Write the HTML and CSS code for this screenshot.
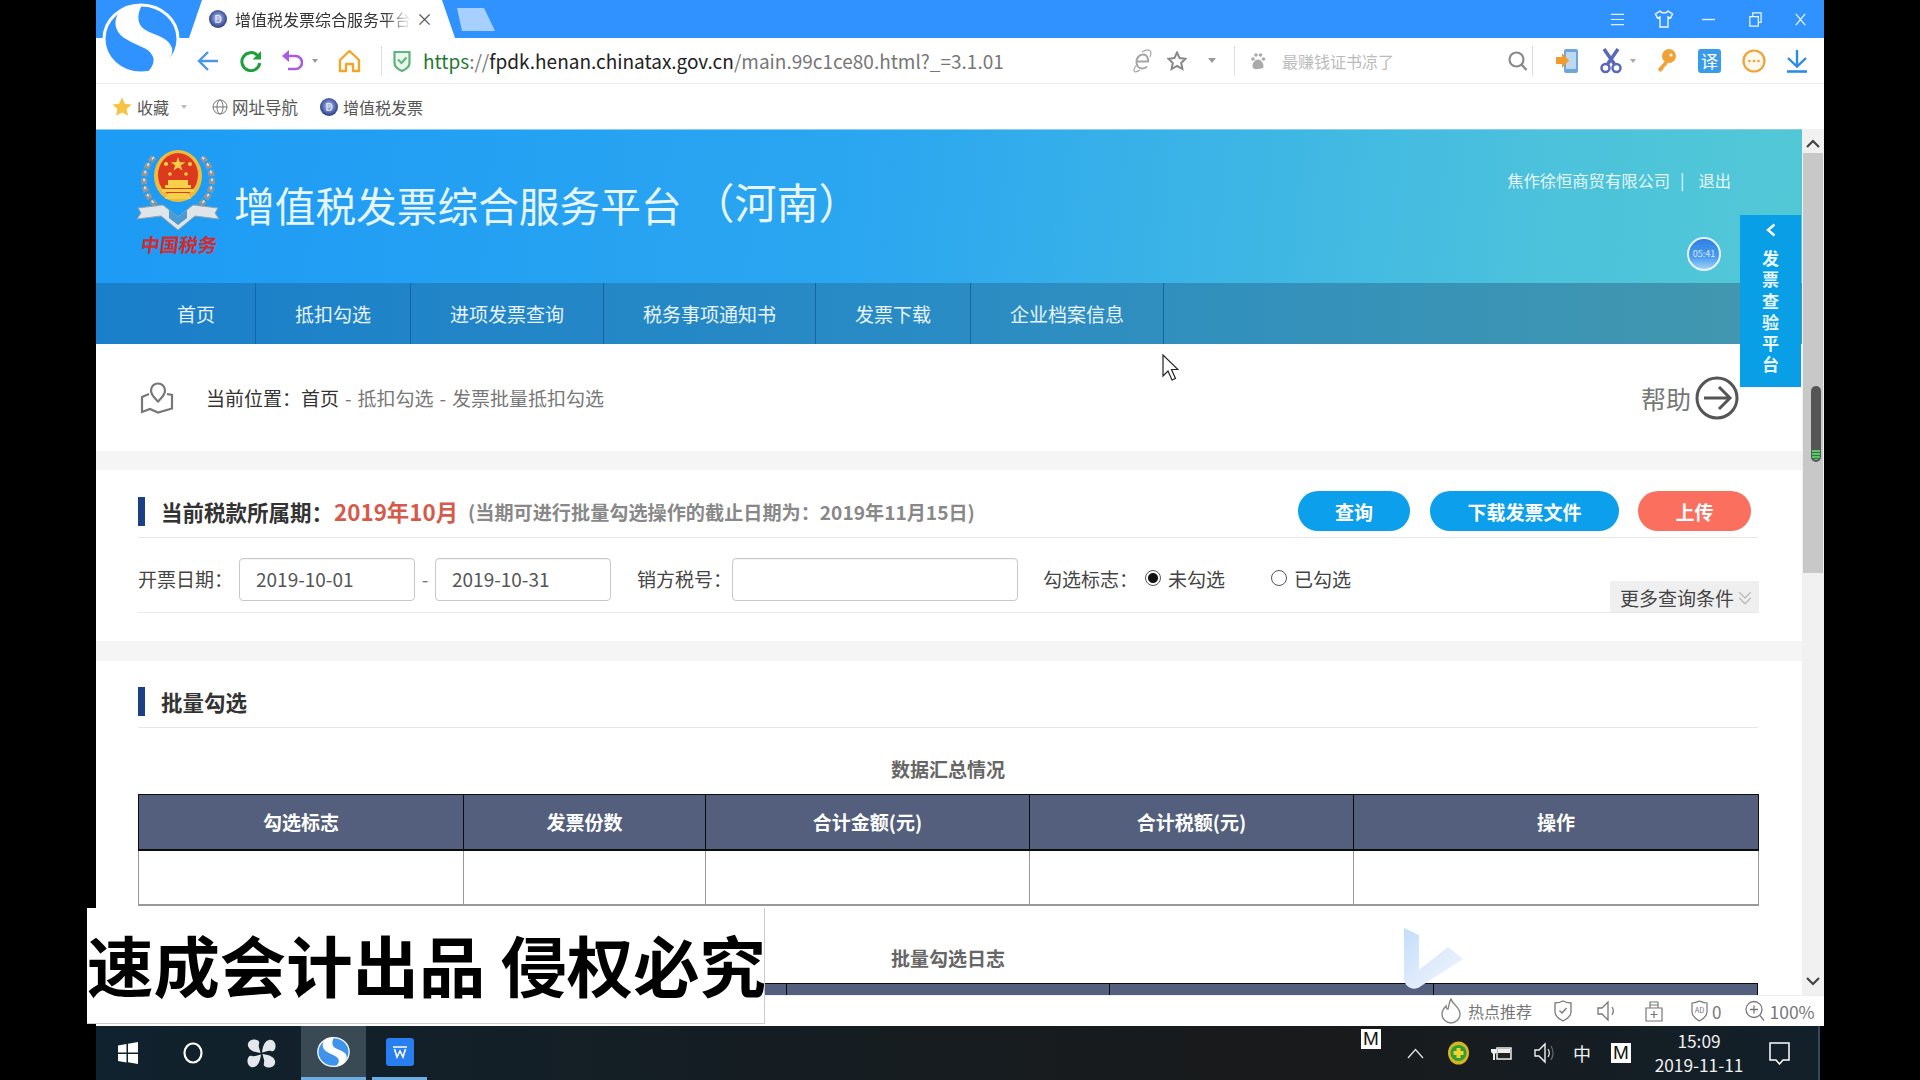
FILE: index.html
```html
<!DOCTYPE html>
<html lang="zh-CN">
<head>
<meta charset="utf-8">
<title>增值税发票综合服务平台</title>
<link rel="stylesheet" href="styles.css">
</head>
<body>
<div class="window">
  <div class="titlebar">
    <div class="tab">
      <svg class="fav" viewBox="0 0 18 18"><defs><radialGradient id="fg" cx="50%" cy="45%" r="55%"><stop offset="0" stop-color="#c9d4f0"/><stop offset=".6" stop-color="#5a70b8"/><stop offset="1" stop-color="#2a3a78"/></radialGradient></defs><circle cx="9" cy="9" r="9" fill="url(#fg)"/><text x="9" y="13" font-size="11" text-anchor="middle" fill="#eef">D</text></svg>
      <span class="tab-text">增值税发票综合服务平台</span>
      <span class="tab-x">×</span>
    </div>
    <div class="newtab"></div>
    <div class="winctl">
      <svg class="wc" viewBox="0 0 16 16"><path d="M1 2.500h14M1 8h14M1 13.500h14" stroke="#e3f0ff" stroke-width="1.300" fill="none"/></svg>
      <svg class="wc wc-shirt" viewBox="0 0 20 20"><path d="M6 2 1.500 5l2 4 2.500-1v10h8V8l2.500 1 2-4L14 2c-1 2.500-7 2.500-8 0Z" stroke="#f0f7ff" stroke-width="1.400" fill="none"/></svg>
      <svg class="wc wc-min" viewBox="0 0 16 16"><path d="M1 8h14" stroke="#e3f0ff" stroke-width="1.500"/></svg>
      <svg class="wc wc-res" viewBox="0 0 16 16"><path d="M2 5h9v10H2zM5 5V1h9v10h-3" stroke="#f0f7ff" stroke-width="1.300" fill="none"/></svg>
      <svg class="wc wc-close" viewBox="0 0 16 16"><path d="M3 2l10 12M13 2 3 14" stroke="#f0f7ff" stroke-width="1.300"/></svg>
    </div>
  </div>

  <div class="addrbar">
    <svg class="i-back" viewBox="0 0 22 22"><path d="M21 11H2M11 2 2 11l9 9" stroke="#4a96e8" stroke-width="2.400" fill="none"/></svg>
    <svg class="i-refresh" viewBox="0 0 22 22"><path d="M17.500 5.500A9 9 0 1 0 19.800 13" stroke="#1d9f3c" stroke-width="3" fill="none"/><path d="M21 1v8.500h-8.500z" fill="#1d9f3c"/></svg>
    <svg class="i-undo" viewBox="0 0 21 22"><path d="M5 6h8.500a6.500 6.500 0 0 1 0 13H6" stroke="#ab5be0" stroke-width="2.600" fill="none"/><path d="M7 0v12L0 6z" fill="#ab5be0"/></svg>
    <svg class="i-dd1" viewBox="0 0 6 4"><path d="M0 0h6L3 4z" fill="#999"/></svg>
    <svg class="i-home" viewBox="0 0 23 24"><path d="M2 11 11.500 2 21 11v11h-6v-7H8v7H2z" stroke="#f3a52a" stroke-width="2.400" fill="none" stroke-linejoin="round"/></svg>
    <span class="sep sep-a"></span>
    <svg class="i-shield" viewBox="0 0 18 22"><path d="M1.500 2h15v11c0 4-4 6.500-7.500 8-3.500-1.500-7.500-4-7.500-8z" stroke="#5db57c" stroke-width="2.200" fill="#eaf6ee"/><path d="m5 9.500 3.500 3.500 5-5.500" stroke="#5db57c" stroke-width="2" fill="none"/></svg>
    <span class="url"><span class="u-g">https</span><span class="u-l">://</span><span class="u-d">fpdk.henan.chinatax.gov.cn</span><span class="u-l">/main.99c1ce80.html?_=3.1.01</span></span>
    <svg class="i-e" viewBox="0 0 20 24"><g fill="none" stroke="#a5a5a5"><path d="M4 12.500h11c.5-4-1.500-7-5-7-4 0-6.500 3.500-6.500 7.500s2.500 6.500 6 6.500c2 0 3.500-.7 4.500-2" stroke-width="2"/><path d="M3.500 16C-1 22 1 25 7 21M9 3c6-3.500 11-3 8 5" stroke-width="1.200"/></g></svg>
    <svg class="i-star" viewBox="0 0 20 20"><path d="m10 1.500 2.600 5.600 6 .7-4.400 4.100 1.200 6L10 15l-5.400 3 1.200-6L1.400 7.800l6-.7z" stroke="#888" stroke-width="2" fill="none"/></svg>
    <svg class="i-dd2" viewBox="0 0 8 5"><path d="M0 0h8L4 5z" fill="#999"/></svg>
    <span class="sep sep-b"></span>
    <svg class="i-paw" viewBox="0 0 16 18"><g fill="#aaa"><circle cx="3" cy="7" r="1.800"/><circle cx="6" cy="3" r="1.800"/><circle cx="10.500" cy="3" r="1.800"/><circle cx="13.500" cy="7" r="1.800"/><path d="M8 7.500c-3 0-5.500 3.500-5.500 6.500 0 3 3 3.500 5.500 3s5.500 0 5.500-3c0-3-2.500-6.500-5.500-6.500Z"/></g></svg>
    <span class="search-ph">最赚钱证书凉了</span>
    <svg class="i-search" viewBox="0 0 20 20"><circle cx="8.500" cy="8.500" r="7" stroke="#8a8a8a" stroke-width="2.200" fill="none"/><path d="m13.500 13.500 5 5.500" stroke="#8a8a8a" stroke-width="2.400"/></svg>
    <span class="sep sep-c"></span>
    <svg class="i-phone" viewBox="0 0 23 26"><rect x="8" y="1" width="14" height="24" rx="2" fill="#6ea6dc"/><rect x="10" y="4" width="10" height="17" fill="#bcd8f2"/><path d="M0 9h6V5l7 7.500L6 20v-4H0z" fill="#f29a2e"/></svg>
    <svg class="i-scis" viewBox="0 0 22 26"><path d="M4 1 15 17M18 1 7 17" stroke="#5a68b8" stroke-width="3.500"/><circle cx="5.500" cy="20" r="4" stroke="#5a68b8" stroke-width="2.500" fill="none"/><circle cx="16.500" cy="20" r="4" stroke="#5a68b8" stroke-width="2.500" fill="none"/></svg>
    <svg class="i-dd3" viewBox="0 0 6 4"><path d="M0 0h6L3 4z" fill="#aaa"/></svg>
    <svg class="i-key" viewBox="0 0 20 24"><circle cx="13" cy="7" r="7" fill="#f0a236"/><path d="M10 11 2 20l2 3 3-2 1-3 2-1 3-6z" fill="#f0a236"/><circle cx="15" cy="6" r="1.500" fill="#fff"/></svg>
    <span class="i-yi">译</span>
    <svg class="i-more" viewBox="0 0 24 24"><circle cx="12" cy="12" r="10.500" stroke="#f0a236" stroke-width="2.200" fill="#fff8ec"/><g fill="#f0a236"><circle cx="7.500" cy="12" r="1.300"/><circle cx="12" cy="12" r="1.300"/><circle cx="16.500" cy="12" r="1.300"/></g></svg>
    <svg class="i-down" viewBox="0 0 24 24"><path d="M12 1v15M3 9l9 8.500L21 9" stroke="#2a8ce8" stroke-width="2.400" fill="none"/><path d="M2 22.500h20" stroke="#2a8ce8" stroke-width="2.600"/></svg>
  </div>

  <div class="bookbar">
    <svg class="b-star" viewBox="0 0 20 20"><path d="m10 .5 2.900 6.200 6.700.8-5 4.600 1.400 6.700L10 15.400l-6 3.400 1.400-6.700-5-4.600 6.700-.8z" fill="#f6c344"/></svg>
    <span class="b-t1">收藏</span>
    <svg class="b-dd" viewBox="0 0 6 4"><path d="M0 0h6L3 4z" fill="#bbb"/></svg>
    <svg class="b-globe" viewBox="0 0 16 16"><g stroke="#777" fill="none"><circle cx="8" cy="8" r="7"/><ellipse cx="8" cy="8" rx="3" ry="7"/><path d="M1 8h14"/></g></svg>
    <span class="b-t2">网址导航</span>
    <svg class="b-fav" viewBox="0 0 18 18"><circle cx="9" cy="9" r="9" fill="url(#fg)"/><text x="9" y="13" font-size="11" text-anchor="middle" fill="#eef">D</text></svg>
    <span class="b-t3">增值税发票</span>
  </div>

  <div class="viewport">
    <div class="page">
      <header class="header">
        <div class="brand">
          <svg class="emblem" viewBox="0 0 86 82">
            <g stroke="#8d979c" stroke-width="6" fill="none" stroke-dasharray="6 2">
              <path d="M19 8C3 24 6 50 30 62"/><path d="M67 8c16 16 13 42-11 54"/>
            </g>
            <g stroke="#e6ecee" stroke-width="1.500" fill="none" stroke-dasharray="3 5">
              <path d="M19 8C3 24 6 50 30 62"/><path d="M67 8c16 16 13 42-11 54"/>
            </g>
            <ellipse cx="43" cy="27" rx="24" ry="26" fill="#eebb3e"/>
            <ellipse cx="43" cy="26" rx="20" ry="22" fill="#dc3a1e"/>
            <g fill="#f7d04a">
              <path d="m43 8 1.800 5.200h5.400l-4.400 3.200 1.700 5.200-4.500-3.200-4.500 3.200 1.700-5.200-4.400-3.200h5.400z"/>
              <circle cx="31" cy="15" r="2"/><circle cx="55" cy="15" r="2"/><circle cx="35" cy="25" r="1.800"/><circle cx="51" cy="25" r="1.800"/>
              <path d="M30 36h26v3H30zM33 31h20v5H33zM27 40h32v3H27z"/>
              <path d="M33 44h20l3 6H30z"/>
            </g>
            <path d="M3 59 28 56 43 68 58 56 83 59 80 64 84 70 60 67 43 81 26 67 2 70 6 64Z" fill="#dfe5e8" stroke="#98a3aa" stroke-width="1"/>
            <path d="M34 61 43 68 52 61 52 69 43 76 34 69Z" fill="#4a9ad4"/>
          </svg>
          <span class="brand-cn">中国税务</span>
        </div>
        <h1 class="title">增值税发票综合服务平台</h1>
        <div class="region">（河南）</div>
        <div class="head-right">
          <div class="user"><span>焦作徐恒商贸有限公司</span><span class="bar-sep">|</span><span>退出</span></div>
          <div class="clock">05:41</div>
        </div>
      </header>
      <nav class="nav">
        <a class="nav-item nav-first">首页</a>
        <a class="nav-item">抵扣勾选</a>
        <a class="nav-item">进项发票查询</a>
        <a class="nav-item">税务事项通知书</a>
        <a class="nav-item">发票下载</a>
        <a class="nav-item">企业档案信息</a>
      </nav>

      <div class="crumb">
        <svg class="c-icon" viewBox="0 0 34 32"><g stroke="#777" stroke-width="2.200" fill="none"><path d="M18 1.500c-4 0-7 3-7 7 0 4.500 4 8 7 11 3-3 7-6.500 7-11 0-4-3-7-7-7Z"/><path d="M9 12 2 15v15l8-3 8 3.500 14-4V13l-5-1"/></g></svg>
        <span class="c-text"><b class="c-dark">当前位置：首页</b> - 抵扣勾选 - 发票批量抵扣勾选</span>
        <span class="help">帮助</span>
        <svg class="help-ic" viewBox="0 0 44 44"><circle cx="22" cy="22" r="20" stroke="#555" stroke-width="3" fill="none"/><path d="M9 22h25M24 11l11 11-11 11" stroke="#555" stroke-width="3" fill="none"/></svg>
      </div>

      <section class="panel">
        <div class="sec-head">
          <span class="sec-bar"></span>
          <span class="sec-title">当前税款所属期：</span>
          <span class="period">2019年10月</span>
          <span class="note">(当期可进行批量勾选操作的截止日期为：2019年11月15日)</span>
          <div class="btns">
            <button class="btn btn-q">查询</button>
            <button class="btn btn-d">下载发票文件</button>
            <button class="btn btn-u">上传</button>
          </div>
        </div>
        <div class="filters">
          <label class="lb lb1">开票日期：</label>
          <input class="ipt ipt-date" value="2019-10-01">
          <span class="dash">-</span>
          <input class="ipt ipt-date" value="2019-10-31">
          <label class="lb lb2">销方税号：</label>
          <input class="ipt ipt-tax">
          <label class="lb lb3">勾选标志：</label>
          <span class="radio radio-on"></span><span class="r-t">未勾选</span>
          <span class="radio radio-2"></span><span class="r-t">已勾选</span>
          <div class="more">更多查询条件<svg class="more-ic" viewBox="0 0 12 14"><path d="m1 2 5 5 5-5M1 7l5 5 5-5" stroke="#bbb" stroke-width="1.200" fill="none"/></svg></div>
        </div>
      </section>

      <section class="panel panel-2">
        <div class="sec-head">
          <span class="sec-bar"></span>
          <span class="sec-title">批量勾选</span>
        </div>
        <div class="cap cap-1">数据汇总情况</div>
        <table class="tbl">
          <colgroup><col class="c1"><col class="c2"><col class="c3"><col class="c3"><col class="c5"></colgroup>
          <thead><tr><th>勾选标志</th><th>发票份数</th><th>合计金额(元)</th><th>合计税额(元)</th><th>操作</th></tr></thead>
          <tbody><tr><td></td><td></td><td></td><td></td><td></td></tr></tbody>
        </table>
        <div class="cap cap-2">批量勾选日志</div>
        <table class="tbl">
          <thead><tr><th></th><th></th><th></th><th></th><th></th></tr></thead>
        </table>
      </section>

      <aside class="sidetab">
        <svg class="side-ch" viewBox="0 0 10 14"><path d="M8.500 1.500 2 7l6.500 5.500" stroke="#fff" stroke-width="2.400" fill="none"/></svg>
        <span>发</span><span>票</span><span>查</span><span>验</span><span>平</span><span>台</span>
      </aside>
    </div>
    <div class="scrollbar">
      <svg class="sb-up" viewBox="0 0 14 9"><path d="m1 8 6-6 6 6" stroke="#444" stroke-width="2.200" fill="none"/></svg>
      <div class="sb-thumb"><div class="sb-dark"><div class="sb-green"></div></div></div>
      <svg class="sb-down" viewBox="0 0 14 9"><path d="m1 1 6 6 6-6" stroke="#444" stroke-width="2.200" fill="none"/></svg>
    </div>
  </div>

  <div class="statusbar">
    <svg class="s-flame" viewBox="0 0 22 26"><path d="M11 1c1 5 9 8 9 15a9 9 0 0 1-18 0c0-4 2-6 4-8 0 2 1 3 2 3 1-3 1-7 3-10Z" stroke="#888" stroke-width="1.400" fill="none"/></svg>
    <span class="s-hot">热点推荐</span>
    <svg class="s-shield" viewBox="0 0 18 22"><path d="M1 3c3 0 6-1 8-2 2 1 5 2 8 2v9c0 4-4 7-8 9-4-2-8-5-8-9z" stroke="#777" stroke-width="1.300" fill="none"/><path d="m5.500 10.500 2.500 2.500 4.500-5" stroke="#777" stroke-width="1.300" fill="none"/></svg>
    <svg class="s-spk" viewBox="0 0 21 22"><path d="M1 8h4l6-6v18l-6-6H1z" stroke="#777" stroke-width="1.300" fill="none"/><path d="M15 7c2 3 2 5 0 8" stroke="#777" stroke-width="1.300" fill="none"/></svg>
    <svg class="s-box" viewBox="0 0 18 22"><path d="M1 8h16v13H1zM5 8V2h8v6M5 5h8M9 11v7M5.500 14.500h7" stroke="#777" stroke-width="1.200" fill="none"/></svg>
    <span class="s-ad"><svg class="s-adic" viewBox="0 0 17 22"><path d="M1 3c3 0 5-1 7.500-2C11 2 13 3 16 3v9c0 4-4 7-7.500 9C5 19 1 16 1 12z" stroke="#777" stroke-width="1.200" fill="none"/><text x="8.500" y="13" font-size="7.500" text-anchor="middle" fill="#777">AD</text></svg><span class="s-zero">0</span></span>
    <svg class="s-zoom" viewBox="0 0 20 22"><circle cx="9" cy="9.500" r="8" stroke="#777" stroke-width="1.300" fill="none"/><path d="M9 5.500v8M5 9.500h8M15 15.500l4 5" stroke="#777" stroke-width="1.300"/></svg>
    <span class="s-pct">100%</span>
  </div>
</div>

<div class="taskbar">
  <svg class="t-win" viewBox="0 0 20 22"><path d="M0 3.500 8.500 2v8.500H0zM10 1.800 20 0v10.500H10zM0 12h8.500v8.500L0 19zM10 12h10v10l-10-1.800z" fill="#fff"/></svg>
  <svg class="t-cort" viewBox="0 0 20 22"><ellipse cx="10" cy="11" rx="8.500" ry="9.500" stroke="#fff" stroke-width="2.200" fill="none"/></svg>
  <svg class="t-pin" viewBox="0 0 29 29"><g fill="#e4e7ec"><path d="M13.500 14C6 13 2 11 1 7s3-7 7-6.500c3 .5 5 2 4 4.500-1 2.500 1 5.500 1.500 9Z"/><path d="M15 13.500C16 6 18 2 22 1s7 3 6.500 7c-.5 3-2 5-4.500 4-2.500-1-5.500 1-9 1.500Z"/><path d="M15.500 15C23 16 27 18 28 22s-3 7-7 6.500c-3-.5-5-2-4-4.500 1-2.500-1-5.500-1.500-9Z"/><path d="M14 15.500C13 23 11 27 7 28s-7-3-6.500-7c.5-3 2-5 4.500-4 2.500 1 5.500-1 9-1.500Z"/></g></svg>
  <div class="t-active">
    <svg class="t-s" viewBox="0 0 78 72"><ellipse cx="39" cy="36" rx="37" ry="34" fill="#3f93ec" stroke="#fff" stroke-width="3"/><path d="M24 3C10 12 10 28 24 36 34 43 46 44 50 52 54 58 50 65 44 71 60 67 72 56 70 45 66 33 50 32 42 26 36 22 34 13 40 2Z" fill="#fff"/></svg>
  </div>
  <div class="t-wps-wrap"><div class="t-wps"><svg viewBox="0 0 18 14"><path d="M2 2h14M3.500 4 6 12l3-6 3 6 2.500-8" stroke="#fff" stroke-width="1.600" fill="none"/></svg></div></div>
  <svg class="t-up" viewBox="0 0 17 11"><path d="m1 10 7.500-8.500L16 10" stroke="#ddd" stroke-width="1.400" fill="none"/></svg>
  <svg class="t-360" viewBox="0 0 21 24"><ellipse cx="10.500" cy="12" rx="10.500" ry="11.500" fill="#d8b51e"/><circle cx="10.500" cy="12" r="8" fill="#2f9d3c"/><path d="M8.500 7h4v3h3v4h-3v3h-4v-3h-3v-4h3z" fill="#f2d42a"/></svg>
  <svg class="t-pow" viewBox="0 0 21 18"><path d="M6 4h14v11H6z" stroke="#eee" stroke-width="1.500" fill="#222"/><path d="M7 5h12v4H7z" fill="#eee"/><path d="M1 1v4M5 1v4M0 5h6v3l-2 2v6H2v-6L0 8z" fill="#eee"/></svg>
  <svg class="t-vol" viewBox="0 0 21 22"><path d="M1 8h4l6-6v18l-6-6H1z" stroke="#eee" stroke-width="1.400" fill="none"/><path d="M14 7c2 3 2 5 0 8" stroke="#ddd" stroke-width="1.300" fill="none"/><path d="M17 4c3 5 3 9 0 14" stroke="#666" stroke-width="1.300" fill="none"/></svg>
  <span class="t-zh">中</span>
  <span class="t-m">M</span>
  <div class="t-clock"><span>15:09</span><span>2019-11-11</span></div>
  <svg class="t-note" viewBox="0 0 21 23"><path d="M1 1h19v17h-6l-3.500 4-3.500-4H1z" stroke="#fff" stroke-width="1.500" fill="none"/></svg>
</div>

<div class="wm">速成会计出品 侵权必究</div>
<span class="ov-m">M</span>
<svg class="logo" viewBox="0 0 78 72"><ellipse cx="39" cy="36" rx="37" ry="34" fill="#2f92fe" stroke="#fff" stroke-width="3"/><path d="M24 3C10 12 10 28 24 36 34 43 46 44 50 52 54 58 50 65 44 71 60 67 72 56 70 45 66 33 50 32 42 26 36 22 34 13 40 2Z" fill="#fff"/></svg>
<svg class="bing" viewBox="0 0 60 70"><defs><linearGradient id="bg" x1="0" y1="0" x2="1" y2="1"><stop offset="0" stop-color="#c4ddf9"/><stop offset=".55" stop-color="#e0ecfc"/><stop offset="1" stop-color="#f1f7fe"/></linearGradient></defs><path d="M0 8 15 15V50L44 27 59 39 14 68Q3 71 0 60Z" fill="url(#bg)"/></svg>
<svg class="cursor" viewBox="0 0 17 27"><path d="M1 1v21l5-5 4 9 3.500-1.500-4-9H16Z" fill="#fff" stroke="#222" stroke-width="1.200"/></svg>
</body>
</html>
```

FILE: styles.css
```css
* { box-sizing: border-box; }
html, body { margin: 0; height: 100%; }
body {
  position: relative;
  width: 1920px;
  height: 1080px;
  overflow: hidden;
  background: #000;
  font-family: "Noto Sans CJK SC", "Noto Sans", sans-serif;
  color: #333;
}
svg { display: block; flex: none; }

.window { margin-left: 96px; width: 1728px; height: 1026px; display: flex; flex-direction: column; background: #fff; }

/* title bar */
.titlebar { height: 38px; background: #2f92fe; display: flex; flex: none; }
.tab {
  margin-left: 93px; width: 266px; height: 38px; background: #fff; display: flex; align-items: center;
  clip-path: polygon(0 100%, 13px 0, 253px 0, 100% 100%);
  padding-left: 20px;
}
.fav { width: 18px; height: 18px; }
.tab-text {
  margin-left: 8px; width: 176px; font-size: 16px; line-height: 24px; white-space: nowrap; color: #333;
  -webkit-mask-image: linear-gradient(90deg, #000 85%, transparent 100%);
  mask-image: linear-gradient(90deg, #000 85%, transparent 100%);
  clip-path: inset(0);
}
.tab-x { margin-left: 5px; font-size: 17px; line-height: 20px; color: #555; }
.newtab { margin: 8px 0 0 2px; width: 38px; height: 23px; background: #a8d0fe; clip-path: polygon(0 0, 27px 0, 100% 100%, 5px 100%); }
.winctl { margin-left: auto; display: flex; align-items: center; }
.wc { width: 15px; height: 15px; }
.wc-shirt { width: 20px; height: 20px; margin-left: 29px; }
.wc-min { width: 15px; margin-left: 27px; }
.wc-res { margin-left: 32px; }
.wc-close { margin-left: 30px; margin-right: 16px; }

/* address bar */
.addrbar { height: 46px; flex: none; display: flex; align-items: center; border-bottom: 1px solid #eee; font-size: 16px; }
.i-back { width: 22px; height: 22px; margin-left: 101px; }
.i-refresh { width: 22px; height: 22px; margin-left: 21px; }
.i-undo { width: 21px; height: 22px; margin-left: 20px; }
.i-dd1 { width: 6px; height: 4px; margin-left: 9px; }
.i-home { width: 23px; height: 24px; margin-left: 20px; }
.sep { width: 1px; height: 30px; background: #ddd; flex: none; }
.sep-a { margin-left: 20px; }
.i-shield { width: 18px; height: 22px; margin-left: 11px; }
.url { margin-left: 12px; width: 590px; font-size: 19px; white-space: nowrap; }
.u-g { color: #1f7a2e; }
.u-l { color: #777; }
.u-d { color: #222; }
.i-e { width: 20px; height: 24px; margin-left: 120px; }
.i-star { width: 20px; height: 20px; margin-left: 14px; }
.i-dd2 { width: 8px; height: 5px; margin-left: 21px; }
.sep-b { margin-left: 18px; }
.i-paw { width: 16px; height: 18px; margin-left: 15px; }
.search-ph { margin-left: 16px; width: 114px; color: #bbb; white-space: nowrap; }
.i-search { width: 20px; height: 20px; margin-left: 112px; }
.sep-c { margin-left: 4px; }
.i-phone { width: 23px; height: 26px; margin-left: 23px; }
.i-scis { width: 22px; height: 26px; margin-left: 21px; }
.i-dd3 { width: 6px; height: 4px; margin-left: 8px; }
.i-key { width: 20px; height: 24px; margin-left: 20px; }
.i-yi { width: 23px; height: 24px; margin-left: 22px; background: #3a9be8; color: #fff; border-radius: 3px; font-size: 17px; line-height: 24px; text-align: center; }
.i-more { width: 24px; height: 24px; margin-left: 21px; }
.i-down { width: 24px; height: 24px; margin-left: 19px; }

/* bookmarks */
.bookbar { height: 45px; flex: none; display: flex; align-items: center; font-size: 16px; color: #555; }
.b-star { width: 20px; height: 20px; margin-left: 16px; }
.b-t1 { margin-left: 5px; }
.b-dd { width: 6px; height: 4px; margin-left: 12px; }
.b-globe { width: 16px; height: 16px; margin-left: 25px; }
.b-t2 { margin-left: 4px; font-size: 16.500px; }
.b-fav { width: 18px; height: 18px; margin-left: 22px; }
.b-t3 { margin-left: 5px; }

/* viewport */
.viewport { height: 866px; flex: none; display: flex; }
.page { position: relative; width: 1706px; height: 866px; overflow: hidden; background: #f5f5f5; flex: none; }

.header { height: 154px; display: flex; align-items: flex-start; color: #e8f6ff; background: linear-gradient(96deg, #1d9bf5 0%, #2ba6f0 45%, #4cc2dc 85%, #52c8d6 100%); border-top: 1px solid #8ccdf0; }
.brand { margin: 19px 0 0 39px; width: 86px; display: flex; flex-direction: column; }
.emblem { width: 86px; height: 82px; }
.brand-cn { margin: 0 0 0 6px; font-size: 19px; line-height: 26px; font-weight: 700; color: #d42a2c; white-space: nowrap; transform: skewX(-8deg); }
.title { margin: 45px 0 0 13px; font-size: 40.700px; line-height: 60px; font-weight: 400; white-space: nowrap; color: #e6f5ff; }
.region { margin: 41px 0 0 11px; font-size: 42px; line-height: 60px; white-space: nowrap; color: #e6f5ff; }
.head-right { margin-left: auto; padding: 38px 71px 0 0; display: flex; flex-direction: column; align-items: flex-end; }
.user { font-size: 16.300px; line-height: 24px; white-space: nowrap; color: #e6f7f9; }
.bar-sep { margin: 0 14px 0 10px; }
.clock { margin: 45px 10px 0 0; width: 34px; height: 34px; border-radius: 50%; border: 2px solid #e8f4fb; background: linear-gradient(180deg, #2f7fe0 0%, #4a9cf0 60%, #9fd0f6 100%); color: #dbeaff; font-size: 9px; line-height: 30px; text-align: center; }

.nav { height: 61px; display: flex; background: linear-gradient(90deg, #1a7fca 0%, #2a8cc4 50%, #4398ad 100%); }
.nav-item { padding: 0 39px; font-size: 19px; line-height: 61px; color: #e9f5ff; border-right: 1px solid #16659f; white-space: nowrap; }
.nav-first { padding: 0 40px 0 81px; }

.crumb { height: 107px; background: #fff; display: flex; align-items: center; padding-left: 44px; font-size: 19px; }
.c-icon { width: 34px; height: 32px; }
.c-text { margin-left: 32px; color: #777; white-space: nowrap; word-spacing: 1.700px; }
.c-dark { color: #333; font-weight: 400; }
.help { margin-left: auto; font-size: 25px; color: #777; }
.help-ic { width: 44px; height: 44px; margin: 0 63px 0 4px; }

.panel { margin-top: 19px; height: 171px; background: #fff; padding: 0 44px 0 42px; }
.panel-2 { height: 400px; margin-top: 20px; }
.sec-head { display: flex; align-items: center; padding: 21px 0 6px; min-height: 67px; border-bottom: 1px solid #e8e8e8; white-space: nowrap; }
.sec-bar { width: 7px; height: 29px; background: #1c3f85; margin-right: 16px; flex: none; }
.sec-title { font-size: 21.500px; font-weight: 700; color: #333; }
.period { margin-left: 1px; font-size: 22.400px; font-weight: 700; color: #d65a4c; }
.note { margin: 2px 0 0 10px; font-size: 19.150px; font-weight: 700; color: #888; }
.btns { margin-left: auto; padding-right: 7px; display: flex; }
.btn { height: 40px; border: 0; border-radius: 20px; background: #0c9fec; color: #fff; font: 700 19px "Noto Sans CJK SC", sans-serif; padding: 0; }
.btn-q { width: 112px; }
.btn-d { width: 189px; margin-left: 20px; }
.btn-u { width: 113px; margin-left: 19px; background: #fb6f5f; }

.filters { height: 75px; padding-top: 20px; display: flex; align-items: flex-start; border-bottom: 1px solid #e8e8e8; font-size: 19px; white-space: nowrap; color: #444; }
.lb { line-height: 41px; flex: none; width: 95px; }
.lb1 { margin-right: 6px; }
.lb2 { margin-left: 26px; }
.lb3 { margin: 0 7px 0 25px; }
.ipt { height: 43px; border: 1px solid #c8c8c8; border-radius: 4px; padding: 0 16px 2px; font: 19px "Noto Sans CJK SC", sans-serif; color: #555; background: #fff; box-shadow: inset 0 1px 1px rgba(0,0,0,.05); outline: 0; flex: none; }
.ipt-date { width: 176px; }
.ipt-tax { width: 286px; }
.dash { width: 20px; text-align: center; line-height: 41px; color: #777; flex: none; }
.radio { width: 16px; height: 16px; margin-top: 12px; border-radius: 50%; border: 1px solid #555; background: #fff; flex: none; }
.radio-on { background: radial-gradient(circle, #111 0 4.500px, #fff 5.500px); }
.radio-2 { margin-left: 46px; }
.r-t { margin-left: 7px; line-height: 41px; }
.more { margin: 0 -1px 0 auto; align-self: flex-end; width: 149px; height: 31px; padding: 2px 0 0 10px; background: #efefef; display: flex; align-items: center; }
.more-ic { width: 14px; height: 16px; margin-left: 4px; }

.cap { text-align: center; font-size: 19px; font-weight: 700; color: #666; line-height: 26px; padding-bottom: 12px; }
.cap-1 { padding-top: 28px; }
.cap-2 { padding-top: 39px; }
.tbl { width: 1620px; border-collapse: collapse; table-layout: fixed; }
.c1 { width: 325px; }
.c2 { width: 242px; }
.c3 { width: 324px; }
.c5 { width: 405px; }
.tbl th { height: 55px; background: #535f7c; border: 1px solid #0d0d0d; border-bottom-width: 2px; color: #fff; font-size: 19px; font-weight: 700; }
.tbl td { height: 55px; border: 1px solid #999; border-bottom-width: 2px; background: #fff; }

.sidetab { position: absolute; left: 1644px; top: 86px; width: 61px; height: 172px; background: #089fe6; color: #e9f7ff; font-size: 17px; font-weight: 700; line-height: 21.300px; display: flex; flex-direction: column; align-items: center; padding-top: 8px; }
.side-ch { width: 10px; height: 14px; margin-bottom: 10px; }

.scrollbar { width: 22px; background: #f1f1f1; display: flex; flex-direction: column; align-items: center; flex: none; }
.sb-up { width: 14px; height: 9px; margin-top: 10px; }
.sb-thumb { margin-top: 5px; width: 20px; height: 420px; background: #c8c8c8; flex: none; padding: 233px 0 0 8px; }
.sb-dark { width: 10px; height: 76px; border-radius: 5px; background: #555; padding-top: 64px; }
.sb-green { width: 8px; height: 10px; margin-left: 1px; border-radius: 0 0 4px 4px; background: repeating-linear-gradient(180deg, #5cc46a 0 2px, #2f7a3a 2px 3px); }
.sb-down { width: 14px; height: 9px; margin-top: 404px; }

/* status bar */
.statusbar { height: 31px; flex: none; display: flex; align-items: center; background: #fff; padding-left: 1344px; color: #777; font-size: 16px; border-top: 1px solid #eee; white-space: nowrap; }
.s-flame { width: 22px; height: 26px; }
.s-hot { margin-left: 6px; }
.s-shield { width: 18px; height: 22px; margin-left: 22px; }
.s-spk { width: 21px; height: 22px; margin-left: 25px; }
.s-box { width: 18px; height: 22px; margin-left: 27px; }
.s-ad { display: flex; align-items: center; margin-left: 28px; }
.s-adic { width: 17px; height: 22px; }
.s-zero { margin-left: 4px; font-size: 17px; }
.s-zoom { width: 20px; height: 22px; margin-left: 24px; }
.s-pct { margin-left: 4px; font-size: 17.500px; }

/* task bar */
.taskbar { margin-left: 96px; width: 1724px; height: 54px; display: flex; align-items: center; background: linear-gradient(90deg, #10222e 0%, #151d22 40%, #191a1b 70%, #12202a 100%); border-right: 2px solid #2d4a5e; color: #f0f0f0; }
.t-win { width: 20px; height: 22px; margin-left: 22px; }
.t-cort { width: 20px; height: 22px; margin-left: 45px; }
.t-pin { width: 29px; height: 29px; margin-left: 44px; }
.t-active { margin-left: 25px; width: 65px; height: 54px; background: #3a4a55; border-bottom: 3px solid #6aaee6; display: flex; align-items: center; justify-content: center; }
.t-s { width: 33px; height: 32px; }
.t-wps-wrap { margin-left: 6px; width: 55px; height: 54px; border-bottom: 3px solid #6aaee6; display: flex; align-items: center; justify-content: center; }
.t-wps { width: 28px; height: 28px; border-radius: 3px; background: #2a7ff0; padding: 7px 5px; }
.t-up { width: 17px; height: 11px; margin-left: 980px; }
.t-360 { width: 21px; height: 24px; margin-left: 24px; }
.t-pow { width: 21px; height: 18px; margin-left: 22px; }
.t-vol { width: 21px; height: 22px; margin-left: 22px; }
.t-zh { margin-left: 18px; width: 18px; font-size: 18px; line-height: 22px; }
.t-m { margin-left: 20px; width: 20px; height: 20px; background: #fff; color: #111; font-size: 19px; line-height: 20px; text-align: center; font-family: "Liberation Sans", sans-serif; }
.t-clock { margin-left: 18px; width: 100px; display: flex; flex-direction: column; align-items: center; font-size: 17.300px; line-height: 24px; white-space: nowrap; }
.t-note { width: 21px; height: 23px; margin-left: 20px; }

/* overlays */
.wm { position: absolute; left: 87px; top: 908px; width: 678px; height: 116px; background: #fff; border-right: 1px solid #ccc; border-bottom: 1px solid #ccc; color: #000; font-size: 66.400px; font-weight: 700; line-height: 110px; white-space: nowrap; overflow: hidden; }
.ov-m { position: absolute; left: 1361px; top: 1029px; width: 20px; height: 20px; background: #fff; color: #111; font: 19px/20px "Liberation Sans", sans-serif; text-align: center; }
.logo { position: absolute; left: 102px; top: 3px; width: 78px; height: 72px; }
.bing { position: absolute; left: 1404px; top: 920px; width: 60px; height: 70px; }
.cursor { position: absolute; left: 1162px; top: 354px; width: 17px; height: 27px; }
```
